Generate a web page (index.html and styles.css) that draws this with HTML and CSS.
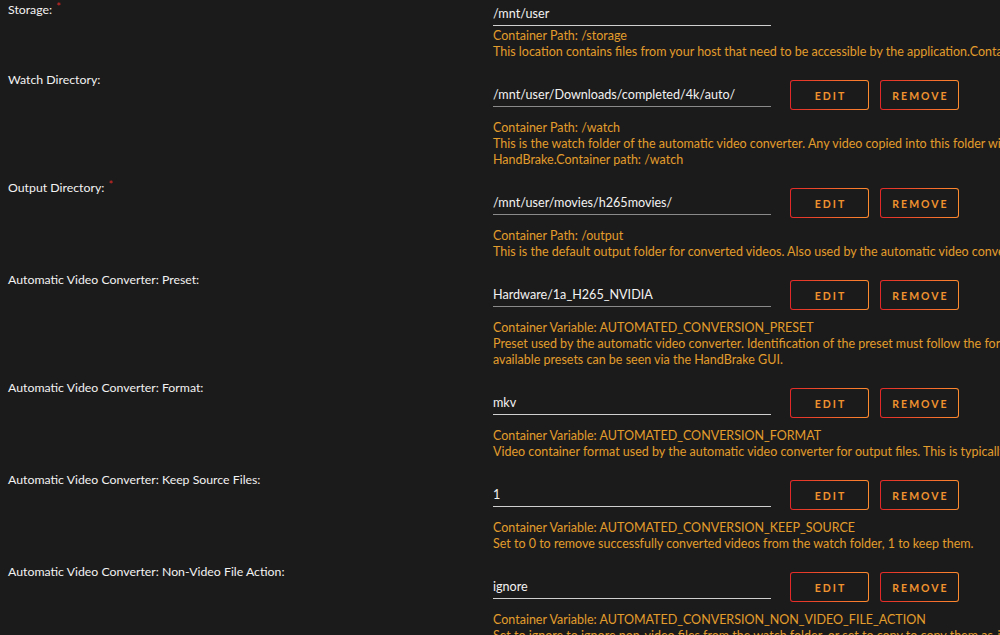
FILE: index.html
```html
<!DOCTYPE html>
<html lang="en">
<head>
<meta charset="utf-8">
<title>Container settings</title>
<link rel="stylesheet" href="styles.css">
</head>
<body>
<div class="form">

  <div class="row">
    <div class="label">Storage: <span class="req">*</span></div>
    <div class="field">
      <div class="control">
        <input class="value light" type="text" value="/mnt/user">
      </div>
      <div class="hint">
        <div>Container Path: /storage</div>
        <div>This location contains files from your host that need to be accessible by the application.Container Path: /storage</div>
      </div>
    </div>
  </div>

  <div class="row">
    <div class="label">Watch Directory:</div>
    <div class="field">
      <div class="control">
        <input class="value" type="text" value="/mnt/user/Downloads/completed/4k/auto/">
        <button class="btn edit" type="button">Edit</button>
        <button class="btn" type="button">Remove</button>
      </div>
      <div class="hint">
        <div>Container Path: /watch</div>
        <div>This is the watch folder of the automatic video converter. Any video copied into this folder will be automatically converted by HandBrake.Container path: /watch</div>
      </div>
    </div>
  </div>

  <div class="row">
    <div class="label">Output Directory: <span class="req">*</span></div>
    <div class="field">
      <div class="control">
        <input class="value" type="text" value="/mnt/user/movies/h265movies/">
        <button class="btn edit" type="button">Edit</button>
        <button class="btn" type="button">Remove</button>
      </div>
      <div class="hint">
        <div>Container Path: /output</div>
        <div>This is the default output folder for converted videos. Also used by the automatic video converter.Container path: /output</div>
      </div>
    </div>
  </div>

  <div class="row">
    <div class="label">Automatic Video Converter: Preset:</div>
    <div class="field">
      <div class="control">
        <input class="value" type="text" value="Hardware/1a_H265_NVIDIA">
        <button class="btn edit" type="button">Edit</button>
        <button class="btn" type="button">Remove</button>
      </div>
      <div class="hint">
        <div>Container Variable: AUTOMATED_CONVERSION_PRESET</div>
        <div>Preset used by the automatic video converter. Identification of the preset must follow the format &lt;CATEGORY&gt;/&lt;PRESET NAME&gt;. All available presets can be seen via the HandBrake GUI.</div>
      </div>
    </div>
  </div>

  <div class="row">
    <div class="label">Automatic Video Converter: Format:</div>
    <div class="field">
      <div class="control">
        <input class="value light" type="text" value="mkv">
        <button class="btn edit" type="button">Edit</button>
        <button class="btn" type="button">Remove</button>
      </div>
      <div class="hint">
        <div>Container Variable: AUTOMATED_CONVERSION_FORMAT</div>
        <div>Video container format used by the automatic video converter for output files. This is typically the video filename extension.</div>
      </div>
    </div>
  </div>

  <div class="row">
    <div class="label">Automatic Video Converter: Keep Source Files:</div>
    <div class="field">
      <div class="control">
        <input class="value light" type="text" value="1">
        <button class="btn edit" type="button">Edit</button>
        <button class="btn" type="button">Remove</button>
      </div>
      <div class="hint">
        <div>Container Variable: AUTOMATED_CONVERSION_KEEP_SOURCE</div>
        <div>Set to 0 to remove successfully converted videos from the watch folder, 1 to keep them.</div>
      </div>
    </div>
  </div>

  <div class="row">
    <div class="label">Automatic Video Converter: Non-Video File Action:</div>
    <div class="field">
      <div class="control">
        <input class="value light" type="text" value="ignore">
        <button class="btn edit" type="button">Edit</button>
        <button class="btn" type="button">Remove</button>
      </div>
      <div class="hint">
        <div>Container Variable: AUTOMATED_CONVERSION_NON_VIDEO_FILE_ACTION</div>
        <div>Set to ignore to ignore non-video files from the watch folder, or set to copy to copy them as-is to the output folder.</div>
      </div>
    </div>
  </div>

</div>
</body>
</html>
```

FILE: styles.css
```css
html, body {
  margin: 0;
  padding: 0;
  background: #1c1b1b;
  overflow: hidden;
}

body {
  font-family: Lato, "Liberation Sans", Arial, sans-serif;
  font-size: 12.3px;
  line-height: 16px;
  color: #f2f2f2;
}

.form {
  padding-left: 8px;
}

.row {
  display: grid;
  grid-template-columns: 485px 775px;
  margin-bottom: 10px;
}

.label {
  color: #f2f2f2;
  padding-top: 2px;
  height: 14px;
}

.req {
  color: #d42a26;
  font-size: 11px;
  line-height: 10px;
  vertical-align: top;
  margin-left: 1px;
}

.control {
  display: flex;
  align-items: center;
}

.value {
  width: 278px;
  height: 26px;
  box-sizing: border-box;
  margin: 0;
  padding: 2px 0 0 0;
  border: 0;
  border-bottom: 1px solid #8a8a8a;
  background: transparent;
  color: #f2f2f2;
  font-family: Lato, "Liberation Sans", Arial, sans-serif;
  font-size: 12.6px;
  outline: none;
}

.value.light {
  border-bottom-color: #cfcfcf;
}

.btn {
  width: 79px;
  height: 30px;
  box-sizing: border-box;
  margin: 10px 0 8px 11px;
  padding: 1px 0 0 2px;
  border: 1px solid transparent;
  border-radius: 3px;
  background:
    linear-gradient(#1c1b1b, #1c1b1b) padding-box,
    linear-gradient(90deg, #e22828 0%, #ff8c2f 100%) border-box;
  color: #f0932f;
  font-family: Lato, "Liberation Sans", Arial, sans-serif;
  font-size: 10.5px;
  font-weight: bold;
  letter-spacing: 2px;
  text-transform: uppercase;
  cursor: pointer;
}

.btn.edit {
  margin-left: 19px;
}

.hint {
  color: #e29d2c;
  font-size: 12.5px;
  padding-top: 2px;
}
```
